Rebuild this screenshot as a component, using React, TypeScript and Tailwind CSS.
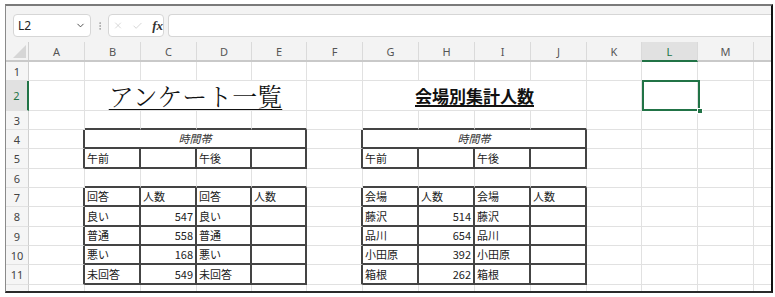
import { X, Check, ChevronDown, EllipsisVertical } from "lucide-react"
import type { ReactNode } from "react"

const COLS = ["A", "B", "C", "D", "E", "F", "G", "H", "I", "J", "K", "L", "M", "N"]
const GRID =
  "grid grid-cols-[23px_56px_56px_56px_55px_55px_56px_56px_56px_56px_56px_55px_56px_56px_56px]"

const ROWS = [
  { n: 1, h: "h-[19px]" },
  { n: 2, h: "h-[30px]" },
  { n: 3, h: "h-[19px]" },
  { n: 4, h: "h-[19px]" },
  { n: 5, h: "h-[20px]" },
  { n: 6, h: "h-[19px]" },
  { n: 7, h: "h-[19px]" },
  { n: 8, h: "h-[20px]" },
  { n: 9, h: "h-[19px]" },
  { n: 10, h: "h-[19px]" },
  { n: 11, h: "h-[20px]" },
  { n: 12, h: "h-[19px]" },
]

const jp = "font-['Noto_Sans_CJK_JP',sans-serif]"

// セル内容
const values: Record<string, { text: string; num?: boolean }> = {
  "5-1": { text: "午前" },
  "5-3": { text: "午後" },
  "5-6": { text: "午前" },
  "5-8": { text: "午後" },
  "7-1": { text: "回答" },
  "7-2": { text: "人数" },
  "7-3": { text: "回答" },
  "7-4": { text: "人数" },
  "7-6": { text: "会場" },
  "7-7": { text: "人数" },
  "7-8": { text: "会場" },
  "7-9": { text: "人数" },
  "8-1": { text: "良い" },
  "8-2": { text: "547", num: true },
  "8-3": { text: "良い" },
  "8-6": { text: "藤沢" },
  "8-7": { text: "514", num: true },
  "8-8": { text: "藤沢" },
  "9-1": { text: "普通" },
  "9-2": { text: "558", num: true },
  "9-3": { text: "普通" },
  "9-6": { text: "品川" },
  "9-7": { text: "654", num: true },
  "9-8": { text: "品川" },
  "10-1": { text: "悪い" },
  "10-2": { text: "168", num: true },
  "10-3": { text: "悪い" },
  "10-6": { text: "小田原" },
  "10-7": { text: "392", num: true },
  "10-8": { text: "小田原" },
  "11-1": { text: "未回答" },
  "11-2": { text: "549", num: true },
  "11-3": { text: "未回答" },
  "11-6": { text: "箱根" },
  "11-7": { text: "262", num: true },
  "11-8": { text: "箱根" },
}

const timeLabel = (
  <div className={`flex h-full items-center justify-center text-[11px] italic text-[#333] ${jp}`}>
    時間帯
  </div>
)

const merges: Record<string, ReactNode> = {
  "2-1": (
    <div
      className={`flex h-full items-center justify-center font-['Noto_Serif_CJK_JP','Noto_Sans_CJK_JP',serif] text-[25px] font-light leading-none text-[#111] underline decoration-1 underline-offset-[3px]`}
    >
      アンケート一覧
    </div>
  ),
  "2-6": (
    <div
      className={`flex h-full items-center justify-center text-[17px] font-bold leading-none text-[#111] underline decoration-2 underline-offset-[2px] ${jp}`}
    >
      会場別集計人数
    </div>
  ),
  "4-1": timeLabel,
  "4-6": timeLabel,
}

const inTable = (r: number, c: number) =>
  [4, 5, 7, 8, 9, 10, 11].includes(r) && ((c >= 1 && c <= 4) || (c >= 6 && c <= 9))

function Row({ n, h }: { n: number; h: string }) {
  const cells: ReactNode[] = []
  let c = 0
  while (c < COLS.length) {
    const key = `${n}-${c}`
    const merged = merges[key]
    const span = merged ? 4 : 1
    const last = c + span - 1
    let darkB = false
    for (let i = c; i <= last; i++) if (inTable(n, i) || inTable(n + 1, i)) darkB = true
    const darkR = inTable(n, last) || inTable(n, last + 1)
    const border = `${darkR ? "border-r-2 border-r-[#444]" : "border-r border-r-[#e1e1e1]"} ${
      darkB ? "border-b-2 border-b-[#444]" : "border-b border-b-[#e1e1e1]"
    }`
    const v = values[key]
    const selected = n === 2 && c === 11
    cells.push(
      <div key={key} className={`${merged ? "col-span-4" : ""} ${border} relative min-w-0 bg-white`}>
        {merged}
        {v && (
          <div
            className={`flex h-full items-center whitespace-nowrap px-[2px] text-[11px] leading-none text-[#222] ${jp} ${
              v.num ? "justify-end" : ""
            }`}
          >
            {v.text}
          </div>
        )}
        {selected && (
          <>
            <div className="absolute -top-px left-0 -right-[3px] -bottom-px z-10 border-2 border-[#217346]" />
            <div className="absolute -bottom-[4px] -right-[6px] z-20 h-[6px] w-[6px] border border-white bg-[#217346]" />
          </>
        )}
      </div>,
    )
    c += span
  }
  const active = n === 2
  return (
    <div className={`${GRID} ${h}`}>
      <div
        className={`flex items-center justify-center border-b border-b-[#e1e1e1] font-['Noto_Sans',sans-serif] text-[11px] leading-none ${
          active
            ? "border-r-2 border-r-[#217346] bg-[#e1e1e1] text-[#217346]"
            : "border-r border-r-[#cfcfcf] bg-[#f5f5f5] text-[#444]"
        }`}
      >
        {n}
      </div>
      {cells}
    </div>
  )
}

export default function App() {
  return (
    <div className="h-[297px] w-[775px] bg-white pl-[5px] pt-[4px]">
      <div className="h-[289px] w-[768px] overflow-hidden border-b-2 border-l border-r-2 border-t-2 border-b-[#2a2a2a] border-l-[#8a8a8a] border-r-[#111] border-t-[#7a7a7a] bg-[#f3f3f3]">
        {/* 数式バー */}
        <div className="flex h-[36px] items-start pt-[8px] pl-[7px]">
          <div className="flex h-[23px] w-[78px] items-center justify-between rounded-[4px] border border-[#d6d6d6] bg-white pl-[4px] pr-[4px]">
            <span className="font-['Noto_Sans',sans-serif] text-[12px] text-[#222]">L2</span>
            <ChevronDown size={11} strokeWidth={2} className="text-[#444]" />
          </div>
          <div className="flex h-[23px] w-[17px] items-center justify-center">
            <EllipsisVertical size={10} strokeWidth={2} className="text-[#9a9a9a]" />
          </div>
          <div className="flex h-[23px] w-[56px] items-center gap-[9px] rounded-[4px] border border-[#d6d6d6] bg-white pl-[4px]">
            <X size={11} strokeWidth={1.3} className="text-[#b9b9b9]" />
            <Check size={12} strokeWidth={1.3} className="text-[#b9b9b9]" />
            <span className="font-['Liberation_Serif',serif] text-[13px] font-bold italic leading-none text-[#333]">
              fx
            </span>
          </div>
          <div className="ml-[4px] h-[23px] flex-1 rounded-l-[4px] border border-r-0 border-[#d6d6d6] bg-white" />
        </div>

        {/* 列見出し */}
        <div className={`${GRID} h-[20px] border-b-2 border-b-[#c9c9c9]`}>
          <div className="flex items-end justify-end border-r border-r-[#cfcfcf] bg-[#f3f3f3] pb-[2px] pr-[2px]">
            <svg width="13" height="13" viewBox="0 0 13 13">
              <polygon points="13,0 13,13 0,13" fill="#d6d6d6" />
            </svg>
          </div>
          {COLS.map((col) => (
            <div
              key={col}
              className={`flex items-center justify-center border-r border-r-[#dadada] font-['Noto_Sans',sans-serif] text-[11px] leading-none ${
                col === "L"
                  ? "-mb-[2px] border-b-2 border-b-[#217346] bg-[#e1e1e1] text-[#217346]"
                  : "bg-[#f3f3f3] text-[#555]"
              }`}
            >
              {col === "N" ? "" : col}
            </div>
          ))}
        </div>

        {ROWS.map((r) => (
          <Row key={r.n} n={r.n} h={r.h} />
        ))}
      </div>
    </div>
  )
}
